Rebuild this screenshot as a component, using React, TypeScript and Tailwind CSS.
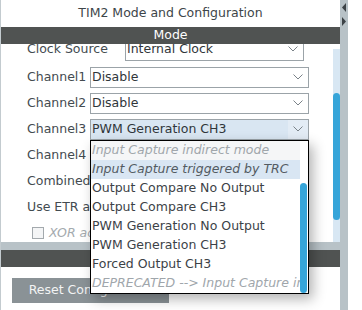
import React from 'react';

const FONT = { fontFamily: '"DejaVu Sans", Verdana, sans-serif' };

function Chevron() {
  return (
    <svg width="10" height="6" viewBox="0 0 10 6" className="shrink-0">
      <path d="M0.5 0.5 L5 5 L9.5 0.5" fill="none" stroke="#7a8288" strokeWidth="1" />
    </svg>
  );
}

function Select({
  value,
  active = false,
  width = 'w-[219px]',
  height = 'h-[21px]',
}: {
  value: string;
  active?: boolean;
  width?: string;
  height?: string;
}) {
  return (
    <div
      className={`flex ${height} ${width} shrink-0 items-center border border-[#9ba3a8] ${active ? 'bg-[#d9e6f2]' : 'bg-white'}`}
    >
      <span className="flex-1 truncate pl-[1px] text-[#30363a]">{value}</span>
      <div className={`flex h-full w-[20px] items-center justify-center ${active ? 'bg-[#e3ecf5]' : ''}`}>
        <Chevron />
      </div>
    </div>
  );
}

const OPTIONS: { label: string; kind: 'muted' | 'hover' | 'plain' }[] = [
  { label: 'Input Capture indirect mode', kind: 'muted' },
  { label: 'Input Capture triggered by TRC', kind: 'hover' },
  { label: 'Output Compare No Output', kind: 'plain' },
  { label: 'Output Compare CH3', kind: 'plain' },
  { label: 'PWM Generation No Output', kind: 'plain' },
  { label: 'PWM Generation CH3', kind: 'plain' },
  { label: 'Forced Output CH3', kind: 'plain' },
  { label: 'DEPRECATED --> Input Capture indirect mode', kind: 'muted' },
];

export default function App() {
  return (
    <div className="relative flex h-[310px] w-[362px] overflow-hidden bg-white text-[12.5px]" style={FONT}>
      <div className="w-px bg-[#c3cbcf]" />

      {/* main panel */}
      <div className="flex w-[339px] flex-col">
        <div className="flex h-[27px] items-center justify-center text-[#3d4549]">TIM2 Mode and Configuration</div>
        <div className="relative z-10 flex h-[17px] items-center justify-center bg-[#505352] text-white">Mode</div>

        <div className="flex h-[198px]">
          <div className="flex-1 overflow-hidden">
            {/* list is scrolled down a little, first row sits under the Mode bar */}
            <div className="-mt-[10px] flex flex-col whitespace-nowrap text-[#434b50]">
              <div className="flex h-[30px] items-center">
                <span className="w-[124px] shrink-0 pl-[26px]">Clock Source</span>
                <Select value="Internal Clock" width="w-[179px]" height="h-[24px]" />
              </div>
              {['Channel1', 'Channel2', 'Channel3', 'Channel4'].map((ch, i) => (
                <div key={ch} className="flex h-[26px] items-center">
                  <span className="w-[89px] shrink-0 pl-[26px]">{ch}</span>
                  <Select value={i === 2 ? 'PWM Generation CH3' : 'Disable'} active={i === 2} />
                </div>
              ))}
              <div className="flex h-[26px] items-center pl-[26px]">Combined Channels</div>
              <div className="flex h-[26px] items-center pl-[26px]">Use ETR as Clearing Source</div>
              <div className="flex h-[26px] items-center pl-[31px]">
                <div className="h-[12px] w-[12px] border border-[#a3a9ad] bg-[#f4f5f6]" />
                <span className="ml-[5px] italic text-[#a4aaae]">XOR activation</span>
              </div>
            </div>
          </div>
          <div className="mt-[5px] flex w-[7px] flex-col bg-[#d8e7f3]">
            <div className="mt-[44px] h-[127px] rounded-full bg-[#36a5d9]" />
          </div>
        </div>

        <div className="h-[8px] bg-[#b8c2c7]" />
        <div className="h-[17px] bg-[#505352]" />
        <div className="ml-[11px] mt-[11px] flex h-[25px] w-[157px] items-center justify-center bg-[#8a9296] text-[#f3f4f4]">
          Reset Configuration
        </div>
      </div>

      {/* side strip */}
      <div className="flex w-[8px] flex-col items-center bg-[#b8c2c7] pt-[3px]">
        <svg width="6" height="24" viewBox="0 0 6 24">
          <path d="M5 0 L1 4.5 L5 9 Z" fill="#3c4246" />
          <path d="M1 14 L5 18.5 L1 23 Z" fill="#3c4246" />
        </svg>
      </div>

      {/* open dropdown */}
      <div className="absolute left-[90px] top-[140px] z-20 flex h-[154px] w-[219px] border border-black bg-white shadow-[4px_5px_12px_rgba(0,0,0,0.3)]">
        <div className="flex w-[209px] flex-col">
          {OPTIONS.map((o) => (
            <div
              key={o.label}
              className={`flex h-[19px] items-center overflow-hidden whitespace-nowrap pl-[1px] ${
                o.kind === 'hover'
                  ? 'bg-[#d9e6f3] italic text-[#535b62]'
                  : o.kind === 'muted'
                    ? `italic text-[#a0a6ab] ${o.label.startsWith('Input') ? 'bg-[#f5f6f7]' : ''}`
                    : 'text-[#3c4247]'
              }`}
            >
              {o.label}
            </div>
          ))}
        </div>
        <div className="flex w-[7px] flex-col">
          <div className="mt-[42px] flex-1 rounded-full bg-[#36a5d9]" />
        </div>
      </div>
    </div>
  );
}
